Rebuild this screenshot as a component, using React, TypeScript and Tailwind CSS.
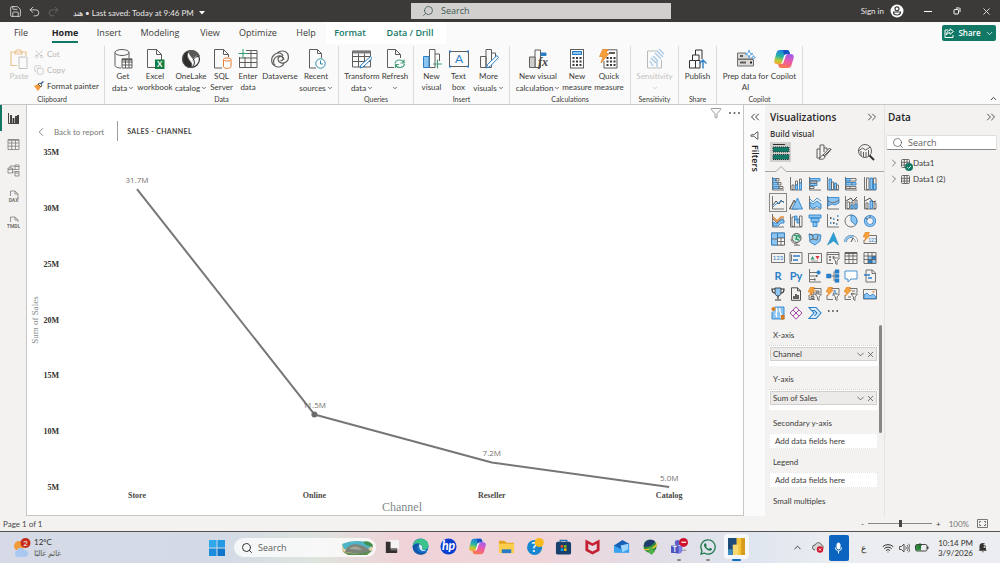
import React from "react";
import {
  ChevronDown,
  ChevronLeft,
  ChevronRight,
  ChevronUp,
  ChevronsLeft,
  ChevronsRight,
  Copy,
  Filter,
  Redo2,
  Save,
  Scissors,
  Search,
  Undo2,
  Wifi,
  X,
} from "lucide-react";
import { FaWhatsapp } from "react-icons/fa";

const INK = "#5f5d5a";
const BLUE = "#2b7fc7";
const SKY = "#8cc4f2";

type SvgProps = { size?: number; box?: string; weight?: number; children: React.ReactNode };

function Glyph({ size = 20, box = "0 0 20 20", weight = 1, children }: SvgProps) {
  return (
    <svg width={size} height={size} viewBox={box} fill="none" stroke={INK} strokeWidth={weight} aria-hidden="true" className="shrink-0">
      {children}
    </svg>
  );
}

function CopilotLogo({ size = 20 }: { size?: number }) {
  const id = React.useId();
  return (
    <svg width={size} height={size} viewBox="0 0 20 20" aria-hidden="true" className="shrink-0">
      <defs>
        <linearGradient id={id + "a"} x1="0.5" y1="0" x2="0.3" y2="1">
          <stop offset="0" stopColor="#1b7fe0" />
          <stop offset="0.45" stopColor="#26b3a4" />
          <stop offset="0.75" stopColor="#b4cf3a" />
          <stop offset="1" stopColor="#f8a62d" />
        </linearGradient>
        <linearGradient id={id + "b"} x1="0.6" y1="0" x2="0.3" y2="1">
          <stop offset="0" stopColor="#a45bf0" />
          <stop offset="0.5" stopColor="#ee5aa6" />
          <stop offset="1" stopColor="#fb7a45" />
        </linearGradient>
      </defs>
      <path d="M6 1h7c1.300 0 2 .8 2.400 2l.5 2h-3c-1.400 0-2.200.8-2.600 2.200L8.400 12.800C8 14.400 7.200 15.200 5.800 15.200H3.200C.8 15.200-.2 13.200.4 11l2-7C2.900 2.200 4.200 1 6 1z" fill={`url(#${id}a)`} />
      <path d="M9 1h4c1.300 0 2 .8 2.400 2l.6 2.100h-3c-1.400 0-2.200.7-2.700 2z" fill="#1852c4" />
      <path d="M14 19H7c-1.300 0-2-.8-2.400-2l-.5-2h2.500c1.400 0 2.600-.8 3-2.200l1.900-5.500c.4-1.500 1.200-2.400 2.600-2.400h2.700c2.400 0 3.400 2 2.800 4.200l-2 7c-.5 1.800-1.800 2.900-3.600 2.900z" fill={`url(#${id}b)`} />
      <path d="M10.600 5.800h1.800c-.7.500-1 1-1.300 2L9.500 13c-.3 1-.9 1.600-1.700 1.900H7c.8-.5 1.100-1.100 1.400-2.100l1.400-5c.2-.8.400-1.400.8-2z" fill="#fff" />
    </svg>
  );
}

const ribbonIcons = {
  getData: (
    <Glyph>
      <ellipse cx="9" cy="3.500" rx="7" ry="3" />
      <path d="M2 3.500v13c0 1.500 3 2.500 6 2.500M16 3.500V9" />
      <path d="M9 10h10v9H9z M9 13h10M9 16h10M12.500 10v9M16 10v9" fill="#fff" />
      <path d="M9 10.500h10" strokeWidth="2" />
    </Glyph>
  ),
  excel: (
    <Glyph>
      <path d="M2.500 .5h9l5 5v13h-14z M11.500 .5v5h5" />
      <rect x="10" y="10.500" width="9.500" height="9.500" fill="#107c41" stroke="none" />
      <text x="14.700" y="18" textAnchor="middle" fontSize="8" fontWeight="bold" fill="#fff" stroke="none">X</text>
    </Glyph>
  ),
  oneLake: (
    <Glyph>
      <circle cx="10" cy="10" r="8.500" strokeWidth="1.200" stroke="#33312f" />
      <path d="M1.800 12C.8 6 4.500 2 8.500 2c-3 3-2.500 6 0 9.500 2 2.500 3 4 2 7C6 19 2.800 16 1.800 12z" fill="#2f2d2b" />
      <path d="M8 2c5-1.500 9 1 10.300 5-3-1-5.300 0-6.300 2.500-2-2-4-4.500-4-7.500z" fill="#5b5957" />
      <path d="M12 9.500c2 3 2 6-1 9M18 7.500c-3 0-5 1-6 4" stroke="#33312f" />
    </Glyph>
  ),
  sql: (
    <Glyph>
      <path d="M10 19H2.500V.5h9l5 5V8 M11.500 .5v5h5" />
      <path d="M11.500 10.500v7c0 2.500 7.500 2.500 7.500 0v-7" fill="#fff" stroke="#e97b35" />
      <ellipse cx="15.200" cy="10.500" rx="3.700" ry="1.600" fill="#fff" stroke="#e97b35" />
    </Glyph>
  ),
  enter: (
    <Glyph>
      <path d="M8 1.500h11v17H1.500V8 M1.500 9h17.500M1.500 13.500h17.500M8 4.500h11M7 8v10.500M13 1.500v17" />
      <path d="M5 0v9M.5 4.500h9" stroke="#2f9c6c" />
    </Glyph>
  ),
  dataverse: (
    <Glyph>
      <path d="M16 3c3 2 3.500 8 0 10-3 2-7.500 1.500-8-3 0-3 4-3.500 5-1 .5 1.500-1 3-2.500 2.500" strokeWidth="1.200" />
      <path d="M5 17c-4-1.500-4.500-8-1-11 3-3 8-2.500 9 1M5 17c3 2 8 1 9-3M16 3c-4-2-7-.5-9 1M5 16c-3-3-1-8 3-9 3-.8 6 .5 6 4" strokeWidth="1.100" />
    </Glyph>
  ),
  recent: (
    <Glyph>
      <path d="M10 19H3.500V.5h8l4 4V9 M11.500 .5v4h4" />
      <circle cx="14.500" cy="14.500" r="4.700" fill="#fff" stroke="#2d8aa8" />
      <path d="M14.500 11.500v3.500h2.500" stroke="#2d8aa8" />
    </Glyph>
  ),
  transform: (
    <Glyph>
      <path d="M.5 2h18v16H.5z M.5 7.500h18M.5 12.500h18M6.500 4.500V18M12.500 4.500V18" />
      <path d="M.5 3.200h18" strokeWidth="2.500" stroke="#7a7876" />
      <path d="M18.500 7.500l1.500 2L11 18l-3 1 1-3z" fill="#fff" stroke={BLUE} />
    </Glyph>
  ),
  refresh: (
    <Glyph>
      <path d="M9 18.500H2.500V.5h8l5 5V9 M10.500 .5v5h5" />
      <path d="M10 14.500c1-4.500 7.500-4.500 8.500-1M19 10.500v3.500h-3.500M19.500 15c-1 4.500-7.500 4.500-8.500 1M10.500 19v-3.500H14" stroke="#4aa07a" strokeWidth="1.200" />
    </Glyph>
  ),
  newVisual: (
    <Glyph>
      <path d="M7.500 .5h5.500v18H7.500z" fill="#fff" />
      <path d="M13 5h4.500v7" />
      <path d="M1.500 7.500h5.500v11H1.500z" fill="#8cc4f2" stroke={BLUE} />
      <path d="M15.500 10.500v9M11 15h9" stroke="#4aa07a" strokeWidth="1.200" />
    </Glyph>
  ),
  textBox: (
    <Glyph>
      <rect x="0.500" y="2.500" width="19" height="15" />
      <text x="10" y="14" textAnchor="middle" fontSize="12" fill={BLUE} stroke="none">A</text>
      <path d="M0 1.500h2v2H0z M18 1.500h2v2h-2z M0 16.500h2v2H0z M18 16.500h2v2h-2z" fill={BLUE} stroke="none" />
    </Glyph>
  ),
  moreVisuals: (
    <Glyph>
      <path d="M7 .5h5.500v18H7z M1.500 7.500H7v11H1.500z M12.500 4h4v5" />
      <path d="M18 6.500l1.500 2L11 17.500l-3.500 1.500 1-3.500z" fill="#fff" stroke={BLUE} />
    </Glyph>
  ),
  newCalc: (
    <Glyph>
      <path d="M7 1h5.500v17.500H7z" />
      <path d="M1.500 8H7v10.500H1.500z" fill="#d0cecc" />
      <path d="M13 4h5v2.500h-5z" fill={BLUE} stroke={BLUE} />
      <text x="15" y="17" textAnchor="middle" fontFamily="Liberation Serif, serif" fontStyle="italic" fontWeight="bold" fontSize="12" fill="#4a4846" stroke="none">fx</text>
    </Glyph>
  ),
  newMeasure: (
    <Glyph>
      <rect x="3.500" y="0.500" width="13" height="18.500" fill="#fff" />
      <rect x="5.500" y="2.500" width="9" height="3" fill={SKY} stroke={BLUE} />
      <path d="M5.500 9h9M5.500 12.500h9M5.500 16h9" strokeWidth="2" strokeDasharray="2 1.500" stroke="#3b3a39" />
    </Glyph>
  ),
  quickMeasure: (
    <Glyph>
      <path d="M8 .8h10v18.200H5V12" fill="#fff" />
      <path d="M10 4h6" strokeWidth="2" />
      <path d="M7.500 9h9M7.500 12.500h9M7.500 16h9" strokeWidth="2" strokeDasharray="2 1.500" stroke="#3b3a39" />
      <path d="M4 0h5L7 4.500h3L2 14l2-6.500H.5z" fill="#f9a13a" stroke="#e07b1d" strokeWidth=".7" />
    </Glyph>
  ),
  sensitivity: (
    <Glyph>
      <g opacity=".4">
        <path d="M12 2H2.500v17h14V11" />
        <path d="M6 9l5 5M8 7l5 5M10 4l6 6M12 2l6 6M14 0l5 5M5 12l3 5M12 12v6" stroke={BLUE} strokeWidth="1.300" />
      </g>
    </Glyph>
  ),
  publish: (
    <Glyph>
      <path d="M7.500 6V1h6.500v9M4.500 11V6H11v5M1.500 11.500h6v7.500h-6zM7.500 11.500H12V19H7.500" stroke="#33312f" />
      <path d="M15 19.500V11M11.500 14.500L15 11l3.500 3.500" stroke={BLUE} strokeWidth="1.400" />
    </Glyph>
  ),
  prep: (
    <Glyph>
      <path d="M10 4H1.500v6h16M1.500 10.500h16v6.500h-16z" fill="#dcdad8" stroke="#706e6b" />
      <path d="M4 7h3M4 13.500h6" strokeWidth="1.800" />
      <path d="M14 13.500h2" strokeWidth="2" stroke="#222" />
      <path d="M13 1l1 3 3 1-3 1-1 3-1-3-3-1 3-1zM17.500 6.500l.5 1.500 1.500.5-1.500.5-.5 1.500-.5-1.500-1.500-.5L17 8z" fill="#fff" stroke="#4a9be0" strokeWidth=".8" />
    </Glyph>
  ),
  copilot: <CopilotLogo />,
};

type Command = { icon: React.ReactNode; lines: string[]; menu?: boolean; width: string; disabled?: boolean };
type Group = { name: string; width: string; commands: Command[] };

const groups: Group[] = [
  {
    name: "Data",
    width: "w-[234px]",
    commands: [
      { icon: ribbonIcons.getData, lines: ["Get", "data"], menu: true, width: "w-[28px]" },
      { icon: ribbonIcons.excel, lines: ["Excel", "workbook"], width: "w-[36px]" },
      { icon: ribbonIcons.oneLake, lines: ["OneLake", "catalog"], menu: true, width: "w-[36px]" },
      { icon: ribbonIcons.sql, lines: ["SQL", "Server"], width: "w-[25px]" },
      { icon: ribbonIcons.enter, lines: ["Enter", "data"], width: "w-[28px]" },
      { icon: ribbonIcons.dataverse, lines: ["Dataverse"], width: "w-[36px]" },
      { icon: ribbonIcons.recent, lines: ["Recent", "sources"], menu: true, width: "w-[36px]" },
    ],
  },
  {
    name: "Queries",
    width: "w-[75px]",
    commands: [
      { icon: ribbonIcons.transform, lines: ["Transform", "data"], menu: true, width: "w-[38px]" },
      { icon: ribbonIcons.refresh, lines: ["Refresh", ""], menu: true, width: "w-[28px]" },
    ],
  },
  {
    name: "Insert",
    width: "w-[96px]",
    commands: [
      { icon: ribbonIcons.newVisual, lines: ["New", "visual"], width: "w-[28px]" },
      { icon: ribbonIcons.textBox, lines: ["Text", "box"], width: "w-[26px]" },
      { icon: ribbonIcons.moreVisuals, lines: ["More", "visuals"], menu: true, width: "w-[34px]" },
    ],
  },
  {
    name: "Calculations",
    width: "w-[121px]",
    commands: [
      { icon: ribbonIcons.newCalc, lines: ["New visual", "calculation"], menu: true, width: "w-[46px]" },
      { icon: ribbonIcons.newMeasure, lines: ["New", "measure"], width: "w-[32px]" },
      { icon: ribbonIcons.quickMeasure, lines: ["Quick", "measure"], width: "w-[32px]" },
    ],
  },
  {
    name: "Sensitivity",
    width: "w-[48px]",
    commands: [{ icon: ribbonIcons.sensitivity, lines: ["Sensitivity", ""], menu: true, width: "w-[40px]", disabled: true }],
  },
  {
    name: "Share",
    width: "w-[38px]",
    commands: [{ icon: ribbonIcons.publish, lines: ["Publish"], width: "w-[32px]" }],
  },
  {
    name: "Copilot",
    width: "w-[86px]",
    commands: [
      { icon: ribbonIcons.prep, lines: ["Prep data for", "AI"], width: "w-[48px]" },
      { icon: ribbonIcons.copilot, lines: ["Copilot"], width: "w-[28px]" },
    ],
  },
];

const tabs = [
  { name: "File", width: "w-[42px]" },
  { name: "Home", width: "w-[46px]" },
  { name: "Insert", width: "w-[42px]" },
  { name: "Modeling", width: "w-[60px]" },
  { name: "View", width: "w-[40px]" },
  { name: "Optimize", width: "w-[56px]" },
  { name: "Help", width: "w-[40px]" },
  { name: "Format", width: "w-[48px]" },
  { name: "Data / Drill", width: "w-[72px]" },
];

function TitleBar() {
  return (
    <header className="flex h-[22px] shrink-0 items-center bg-[#3b3a39] text-[8px] text-[#e8e6e4]">
      <div className="flex w-[41.1%] items-center">
        <button aria-label="Save" className="ml-[9px]"><Save size={13} strokeWidth={1.5} /></button>
        <button aria-label="Undo" className="ml-[6px]"><Undo2 size={13} strokeWidth={1.5} /></button>
        <button aria-label="Redo" className="ml-[6px] text-[#6d6b69]" disabled><Redo2 size={13} strokeWidth={1.5} /></button>
        <button className="ml-[13px] flex items-center gap-[5px] pt-[3px] whitespace-nowrap">
          <span><bdi>هند</bdi> • Last saved: Today at 9:46 PM</span>
          <svg width="6" height="4" viewBox="0 0 6 4" aria-hidden="true"><path d="M0 0h6L3 3.500z" fill="#fff" /></svg>
        </button>
      </div>
      <label className="flex h-4 w-[26%] items-center gap-[7px] bg-[#d2d0ce] px-[11px] text-[#3f5c55]">
        <Search size={12} strokeWidth={1.600} className="-scale-x-100" />
        <input aria-label="Search" placeholder="Search" className="min-w-0 flex-1 bg-transparent font-['Open_Sans',sans-serif] text-[9px] outline-none placeholder:text-[#3f5c55]" />
      </label>
      <div className="ml-auto flex items-center">
        <button className="flex items-center gap-[6px]">
          Sign in
          <svg width="14" height="14" viewBox="0 0 14 14" aria-hidden="true">
            <circle cx="7" cy="7" r="6.500" fill="#fff" />
            <circle cx="7" cy="4.800" r="2" fill="none" stroke="#3b3a39" strokeWidth="1.200" />
            <path d="M3.500 8h7c0 4-7 4-7 0z" fill="none" stroke="#3b3a39" strokeWidth="1.200" />
          </svg>
        </button>
        <button aria-label="Minimize" className="ml-5 flex h-3 w-[8px] items-center"><span className="h-px w-full bg-white" /></button>
        <button aria-label="Restore" className="ml-[21px]">
          <svg width="8" height="8" viewBox="0 0 8 8" fill="none" stroke="#fff" aria-hidden="true"><rect x="1" y="2.500" width="4.500" height="4.500" rx=".8" /><path d="M3 1h3.500l.5.500V5" /></svg>
        </button>
        <button aria-label="Close" className="mr-2 ml-5"><X size={11} strokeWidth={2} /></button>
      </div>
    </header>
  );
}

function Tabs() {
  return (
    <nav className="flex h-[22px] shrink-0 items-center bg-[#fafafa] font-['Open_Sans',sans-serif] text-[9px] text-[#3b3a39]">
      {tabs.map((t, i) => (
        <button
          key={t.name}
          className={`${t.width} flex h-full items-center justify-center whitespace-nowrap ${i === 1 ? "font-bold text-[#252423]" : ""} ${i > 6 ? "bg-white font-semibold text-[#117865]" : ""}`}
        >
          <span className={i === 1 ? "border-b-2 border-[#117865] pt-[2px] leading-[16px]" : ""}>{t.name}</span>
        </button>
      ))}
      <button className="mr-1 ml-auto flex h-4 w-[54px] items-center justify-center gap-[4px] rounded-[2px] bg-[#117865] text-[8px] font-semibold text-white">
        <svg width="10" height="10" viewBox="0 0 10 10" fill="none" stroke="#fff" aria-hidden="true"><path d="M4 2H1v7.500h8V7M6 .8L9.500 3.500 6 6.200V4.700C4 4.700 3 5.500 2.500 7c0-2.500 1-4.300 3.500-4.600z" /></svg>
        Share
        <ChevronDown size={9} />
      </button>
    </nav>
  );
}

function Ribbon() {
  return (
    <div className="flex h-[61px] shrink-0 items-stretch border-b border-[#c8c6c4] bg-[#fafafa] pt-[2px] text-[8px] text-[#3b3a39]">
      <section className="flex w-[105px] flex-col border-r border-[#dddbd9]">
        <div className="flex flex-1 pt-[3px]">
          <button disabled className="ml-2 flex w-[22px] flex-col items-center text-[#c4c2c0]">
            <Glyph>
              <path d="M8 16.500H2V3h15v4M6 3c1-3 6-3 7 0v2H6z" stroke="#e9c48f" strokeWidth="1.200" />
              <path d="M10 8h8v11.500h-8z" fill="#fafafa" stroke="#c4c2c0" />
            </Glyph>
            <span className="mt-[2px] leading-[11px]">Paste</span>
          </button>
          <div className="ml-1 flex flex-col">
            <button disabled className="flex h-[10px] items-center gap-[3px] text-[#b8b6b4]"><Scissors size={10} strokeWidth={1.500} className="-rotate-90" />Cut</button>
            <button disabled className="mt-[6px] flex h-[10px] items-center gap-[3px] text-[#b8b6b4]"><Copy size={10} strokeWidth={1.500} />Copy</button>
            <button className="mt-[6px] flex h-[10px] items-center gap-[3px] whitespace-nowrap">
              <svg width="10" height="10" viewBox="0 0 10 10" aria-hidden="true"><path d="M0 5l4-2 3 3-3 4z" fill="#f39a3d" /><path d="M4 3l2-1 2 2-1 2z" fill="#fff" stroke="#3b3a39" strokeWidth=".8" /><path d="M6.500 3L9.500 .5" stroke="#2f5f8a" strokeWidth="1.400" /></svg>
              Format painter
            </button>
          </div>
        </div>
        <div className="h-[10px] text-center text-[7px] leading-[10px]">Clipboard</div>
      </section>
      {groups.map((g) => (
        <section key={g.name} className={`${g.width} flex flex-col border-r border-[#dddbd9]`}>
          <div className="flex flex-1 justify-center pt-[3px]">
            {g.commands.map((c) => (
              <button key={c.lines.join(" ")} disabled={c.disabled} className={`${c.width} flex flex-col items-center ${c.disabled ? "text-[#c4c2c0]" : ""}`}>
                {c.icon}
                <span className="mt-[2px] leading-[11px] whitespace-nowrap">{c.lines[0]}</span>
                {c.lines.length > 1 && (
                  <span className="flex items-center gap-px leading-[11px] whitespace-nowrap">
                    {c.lines[1]}
                    {c.menu && <ChevronDown size={6} strokeWidth={3} className="my-[3px]" />}
                  </span>
                )}
              </button>
            ))}
          </div>
          <div className="h-[10px] text-center text-[7px] leading-[10px]">{g.name}</div>
        </section>
      ))}
      <button aria-label="Collapse ribbon" className="mr-[2px] ml-auto self-end pb-[1px]"><ChevronUp size={9} strokeWidth={2.500} /></button>
    </div>
  );
}

const views = [
  { name: "Report view", icon: <><path d="M1.500 1v10.500H12" /><path d="M4 3v8M6.500 6v5M9 4v7M11 3v8" strokeWidth="1.800" /></> },
  { name: "Table view", icon: <><path d="M1 1.500h11v10H1zM1 5h11M1 8.200h11M4.700 1.500v10M8.500 1.500v10" /><path d="M1 2h11" strokeWidth="1.500" /></> },
  { name: "Model view", icon: <path d="M1 4h4.500v5H1zM8 1h4v4.500H8zM8 7.500h4V12H8zM5.500 5.500H8M5.500 8H8M1 5.500h4.500M8 2.500h4M8 9h4M3 4V2h5" /> },
  { name: "DAX query view", text: "DAX", icon: <path d="M3.500 6V1h4.500l3 3v5.500M8 1v3h3" /> },
  { name: "TMDL view", text: "TMDL", icon: <path d="M3.500 6V1h4.500l3 3v2M8 1v3h3" /> },
];

function ViewRail() {
  return (
    <nav className="flex w-[26px] shrink-0 flex-col bg-[#f3f2f1]">
      {views.map((v, i) => (
        <button key={v.name} aria-label={v.name} className={`flex h-[26px] flex-col items-center justify-center border-l-2 pr-[2px] ${i === 0 ? "border-[#117865]" : "border-transparent"}`}>
          <svg width="13" height="13" viewBox="0 0 13 13" fill="none" stroke={i === 0 ? "#33312f" : "#8a8885"} strokeWidth=".9" aria-hidden="true">
            {v.icon}
            {v.text && <text x="6.500" y="11.500" textAnchor="middle" fontSize="5" fontWeight="bold" fontFamily="Roboto" fill="#74726f" stroke="none">{v.text}</text>}
          </svg>
        </button>
      ))}
    </nav>
  );
}

const sales = [
  { channel: "Store", value: 31.7, label: "31.7M" },
  { channel: "Online", value: 11.5, label: "11.5M" },
  { channel: "Reseller", value: 7.2, label: "7.2M" },
  { channel: "Catalog", value: 5.0, label: "5.0M" },
];
const px = (i: number) => 110 + i * 177.4;
const py = (v: number) => 345 - (v - 5) * 11.16;

function Chart() {
  return (
    <svg viewBox="0 0 716 373" preserveAspectRatio="xMidYMid meet" className="min-h-0 w-full flex-1" role="img" aria-label="Sum of Sales by Channel">
      <g fontFamily="Liberation Serif, serif" fontWeight="bold" fontSize="8" fill="#33312f">
        {[35, 30, 25, 20, 15, 10, 5].map((t) => (
          <text key={t} x="32" y={py(t) + 3} textAnchor="end">{t}M</text>
        ))}
        {sales.map((s, i) => (
          <text key={s.channel} x={px(i)} y="356" textAnchor="middle" fill="#4a4846">{s.channel}</text>
        ))}
      </g>
      <g fontFamily="Liberation Serif, serif" fill="#7f8b8b">
        <text x="375" y="369" textAnchor="middle" fontSize="12">Channel</text>
        <text transform="translate(11 178) rotate(-90)" textAnchor="middle" fontSize="9">Sum of Sales</text>
      </g>
      <polyline points={sales.map((s, i) => `${px(i)},${py(s.value)}`).join(" ")} fill="none" stroke="#757775" strokeWidth="2" strokeLinejoin="round" />
      <circle cx={px(1)} cy={py(11.5)} r="3" fill="#6b6d6b" />
      <g fontFamily="Open Sans, sans-serif" fontSize="8" fill="#75736f" textAnchor="middle">
        {sales.map((s, i) => (
          <text key={s.channel} x={px(i)} y={py(s.value) - 6}>{s.label}</text>
        ))}
      </g>
    </svg>
  );
}

function Canvas() {
  return (
    <main className="flex min-w-0 flex-1 flex-col border-r border-b border-l border-[#c8c6c4] bg-white">
      <div className="flex h-[37px] shrink-0 items-start">
        <button className="mt-5 ml-[7px] flex items-center gap-[6px] text-[8px] leading-[12px] text-[#797775]">
          <ChevronLeft size={14} strokeWidth={1.500} /> Back to report
        </button>
        <div className="mt-4 ml-[13px] h-5 border-l border-[#a19f9d]" />
        <h1 className="mt-5 ml-[9px] text-[7px] leading-[12px] font-bold tracking-wider text-[#484644]">SALES - CHANNEL</h1>
        <button aria-label="Filters on visual" className="mt-[2px] ml-auto text-[#797775]"><Filter size={12} strokeWidth={1.500} /></button>
        <button aria-label="More options" className="mt-[7px] mr-[3px] ml-[7px]">
          <svg width="11" height="2" viewBox="0 0 11 2" fill="#605e5c" aria-hidden="true"><circle cx="1" cy="1" r="1" /><circle cx="5.500" cy="1" r="1" /><circle cx="10" cy="1" r="1" /></svg>
        </button>
      </div>
      <Chart />
    </main>
  );
}

const axis = <path d="M1.500 0v13H13" />;
const bolt = <path d="M2.500 0h4L5 3h2.500L1.500 9l1-4H0z" fill="#f5a13c" stroke="#d9791c" strokeWidth=".5" />;
const funnel = <path d="M7 7h6.500L11 10v3.500L9.500 12.500V10z" fill="#fff" />;

const visuals: { name: string; icon: React.ReactNode }[] = [
  { name: "Stacked bar chart", icon: <>{axis}<path d="M2 1.500h3v2.500H2zM2 5.500h5v2.500H2zM2 9.500h6v2H2z" fill={SKY} stroke={BLUE} /><path d="M5 1.500h3v2.500H5zM7 5.500h3v2.500H7zM8 9.500h4v2H8z" /></> },
  { name: "Stacked column chart", icon: <>{axis}<path d="M3 8h2v4.500H3zM6.500 4h2v4h-2zM10.500 2h2v4h-2z" /><path d="M6.500 8h2v4.500h-2zM10.500 6h2v6.500h-2z" fill={SKY} stroke={BLUE} /></> },
  { name: "Clustered bar chart", icon: <>{axis}<path d="M2 1.500h10v2.500H2zM2 6.500h7v2H2z" fill={SKY} stroke={BLUE} /><path d="M2 4h7v2H2zM2 9.500h4v2H2z" /></> },
  { name: "Clustered column chart", icon: <>{axis}<path d="M3 2h2.500v10.500H3zM8.500 6h2v6.500h-2z" fill={SKY} stroke={BLUE} /><path d="M5.500 5h2v7.500h-2zM10.500 8h2v4.500h-2z" /></> },
  { name: "100% stacked bar chart", icon: <>{axis}<path d="M2 1.500h10v2.500H2zM2 9.500h10v2H2z" /><path d="M2 5.500h10v2.500H2zM2 1.500h4v2.500H2z" fill={SKY} stroke={BLUE} /><path d="M8 5.500v2.500M6 9.500v2" /></> },
  { name: "100% stacked column chart", icon: <>{axis}<path d="M3.500 1h2.500v11.500H3.500zM10.500 1h2.500v11.500h-2.500z" /><path d="M7 1h2.500v11.500H7zM10.500 7h2.500v5.500h-2.500z" fill={SKY} stroke={BLUE} /></> },
  { name: "Line chart", icon: <>{axis}<path d="M2 9l3-4 3 3 2-3 3 1" stroke="#33312f" /><path d="M2 11l3-3 3-1 2-3 3 3" stroke={BLUE} /></> },
  { name: "Area chart", icon: <><path d="M.5 13L5 5l3 4 1 4z" fill="#d8d6d4" /><path d="M3 13L8.500 2l5 11z" fill={SKY} stroke={BLUE} /><path d="M.5 13L5 4l2 2" /></> },
  { name: "Stacked area chart", icon: <>{axis}<path d="M2 6l3 2 4-3 4 3v4.500l-4-2-4 2-3-2z" fill={SKY} stroke={BLUE} /><path d="M2 3l3 3 4-4 4 3" stroke={BLUE} /></> },
  { name: "100% stacked area chart", icon: <>{axis}<path d="M2 1.500h11V7l-4 2-3-1-4 2z" fill={SKY} stroke={BLUE} /><path d="M2 5l4 2 4-1 3-2" /></> },
  { name: "Line and stacked column chart", icon: <>{axis}<path d="M3 6h2.500v6.500H3zM7 6h2v6.500H7zM11 4h2v8.500h-2z" /><path d="M7 9h2v3.500H7zM11 8h2v4.500h-2z" fill={SKY} stroke={BLUE} /><path d="M2 5l5-3 2 3 4-4" stroke="#33312f" /></> },
  { name: "Line and clustered column chart", icon: <>{axis}<path d="M3 7h2v5.500H3zM11 7h2v5.500h-2z" /><path d="M7 5h2.500v7.500H7z" fill={SKY} stroke={BLUE} /><path d="M2 5l5-3 3 4 3-1" stroke="#33312f" /></> },
  { name: "Ribbon chart", icon: <>{axis}<path d="M2 8l4 2 3-4h4v3h-3l-3 3H2z" fill={SKY} stroke={BLUE} /><path d="M2 3l4 4 4-4h3" stroke="#e08a3a" strokeWidth="1.600" /><path d="M2 5l4 4 4-4h3" /></> },
  { name: "Waterfall chart", icon: <>{axis}<path d="M3 3h2.500v9.500H3z" /><path d="M5.500 2H8v4H5.500zM8 5h2.500v4H8z" fill={SKY} stroke={BLUE} /><path d="M10.500 2H13v10.500h-2.500z" /></> },
  { name: "Funnel", icon: <path d="M1 1h12v3H1zM3 4h8v4H3zM5 8h4v4.500H5z" fill={SKY} stroke={BLUE} /> },
  { name: "Scatter chart", icon: <>{axis}<path d="M4 9h1.500M7 5h1.500M10 10h1.500M11 2h1.500" strokeWidth="1.600" stroke={BLUE} /><path d="M4 4h1.500M7 9h1.500M11 6h1.500" strokeWidth="1.600" stroke="#33312f" /></> },
  { name: "Pie chart", icon: <><circle cx="7" cy="7" r="6" /><path d="M7 7V1a6 6 0 0 1 4.500 10z" fill={SKY} stroke={BLUE} /></> },
  { name: "Donut chart", icon: <><circle cx="7" cy="7" r="4.500" stroke={BLUE} strokeWidth="3.200" /><circle cx="7" cy="7" r="4.500" stroke={SKY} strokeWidth="1.800" /><path d="M7 1v3.500M2 4l3 1.500" /></> },
  { name: "Treemap", icon: <><path d="M.5 1h13v12H.5z" /><path d="M.5 1h6v12h-6zM6.500 1h7v5h-7z" fill={SKY} stroke={BLUE} /><path d="M6.500 6h7v7h-7z" fill="#fff" /><path d="M.5 7h6M6.500 9.500h7M10 6v7" /></> },
  { name: "Map", icon: <><circle cx="7.500" cy="6" r="4.500" fill="#cfe9dc" stroke="#33312f" /><path d="M5 3l3 1-1 3 3 1M9 3l2 3" stroke="#2f9c6c" strokeWidth="1.500" /><path d="M2 7c0 3 3 5 6 5M8 11.500V13M5 13.200h6" /></> },
  { name: "Filled map", icon: <><path d="M1 2l4 1 3-1 5 1-1 6-5 4-5-3z" fill={SKY} stroke={BLUE} /><path d="M1 2l4 1v4l4 1 1-5M2 8l3-1" /></> },
  { name: "Azure map", icon: <path d="M7.500 .5L12.500 13l-5-4L1.500 13z" fill="#2e9fd6" stroke="#1d7fb5" strokeWidth=".5" /> },
  { name: "Gauge", icon: <><path d="M1.500 10a5.500 5.500 0 0 1 11 0" strokeWidth="3" /><path d="M1.500 10a5.500 5.500 0 0 1 8-5" strokeWidth="2.200" stroke={SKY} /><path d="M9.500 5a5.500 5.500 0 0 1 3 5" strokeWidth="1.800" stroke="#fff" /><path d="M7 10l2-4" stroke="#33312f" /></> },
  { name: "Card (new)", icon: <><path d="M2 3.500h11.500v8H1V8" /><text x="9.500" y="10" textAnchor="middle" fontSize="5" fill={BLUE} stroke="none">123</text>{bolt}</> },
  { name: "Card", icon: <><path d="M.5 2.500h13v9H.5z" /><text x="7" y="9" textAnchor="middle" fontSize="6" fill={BLUE} stroke="none">123</text></> },
  { name: "Multi-row card", icon: <><path d="M1 1.500h12v11H1z" /><path d="M4 5h7M4 9h5" stroke={BLUE} strokeWidth="1.500" /><path d="M2.500 3.500v7" /></> },
  { name: "KPI", icon: <><path d="M.5 2.500h13v9H.5z" /><path d="M2.500 8.500L4.500 5l2 3.500z" fill="#2f9c6c" stroke="none" /><path d="M7.500 5h4l-2 3.500z" fill="#d9363e" stroke="none" /><path d="M3 10h7" strokeWidth=".6" /></> },
  { name: "Slicer", icon: <><path d="M13 6V1.500H1v11h6M1 3.500h12" /><path d="M3 6h2M3 9h2M6.500 6h2" strokeWidth="1.500" />{funnel}</> },
  { name: "Table", icon: <><path d="M1 1.500h12v11H1zM1 5h12M1 8.500h12M5 1.500v11M9 1.500v11" /><path d="M1 2h12" strokeWidth="1.800" /></> },
  { name: "Matrix", icon: <><path d="M5 5h8v7.500H5z" fill={SKY} stroke="none" /><path d="M9 5h4v3.500H9zM5 8.500h4v4H5z" fill={BLUE} stroke="none" /><path d="M1 1.500h12v11H1zM1 5h12M1 8.500h12M5 1.500v11M9 1.500v11" /></> },
  { name: "R script visual", icon: <text x="7" y="11" textAnchor="middle" fontWeight="bold" fontSize="11" fill={BLUE} stroke="none">R</text> },
  { name: "Python visual", icon: <text x="7" y="11" textAnchor="middle" fontWeight="bold" fontSize="11" fill={BLUE} stroke="none">Py</text> },
  { name: "Key influencers", icon: <>{axis}<path d="M2 3.500h7M2 7h6M2 10.500h4" /><circle cx="10.500" cy="3.500" r="1.700" fill={BLUE} stroke={BLUE} /><path d="M8 7h1.500M6 10.500h1.500" strokeWidth="2" /></> },
  { name: "Decomposition tree", icon: <><path d="M5 7h3V2.500M8 7v5" /><path d="M.5 5h4.500v4H.500zM9 .8h4v3.500H9zM9 5.500h4v3H9zM9 9.800h4v3.500H9z" fill={BLUE} stroke={BLUE} strokeWidth=".5" /></> },
  { name: "Q&A", icon: <path d="M1 2h12v8H7l-3 3v-3H1z" fill="#fff" stroke={BLUE} /> },
  { name: "Narrative", icon: <><path d="M3 1h6.500l3 3v9H3zM9 1v3.500h3" /><path d="M1 6h6M5 9h4" stroke={BLUE} strokeWidth="1.300" /></> },
  { name: "Goals", icon: <><path d="M4 1h6v5c0 4-6 4-6 0z" fill={SKY} stroke="#33312f" /><path d="M4 2H1c0 3 1 4 3 4M10 2h3c0 3-1 4-3 4M7 9v3M4 13h6" stroke="#33312f" strokeWidth="1.200" /></> },
  { name: "Paginated report", icon: <><path d="M2.500 .8h6l3 3v9.500h-9zM8.500 .8v3h3" stroke="#33312f" /><path d="M5 9v3M7 7v5M9 8v4" strokeWidth="1.500" stroke="#33312f" /></> },
  { name: "Button slicer", icon: <><path d="M5 1.500h8V6M1 8v4.500h6" /><path d="M3 5h3v3H3zM8 4h3v2H8zM3 9.500h3v2H3z" fill="#d0cecc" />{funnel}{bolt}</> },
  { name: "Text slicer", icon: <><path d="M5 1.500h8V6M1 8v4.500h6" /><text x="8.500" y="9" textAnchor="middle" fontSize="7" fill={BLUE} stroke="none">A</text>{funnel}{bolt}</> },
  { name: "List slicer", icon: <><path d="M5 1.500h8V6M1 8v4.500h6M8 4h3M7 6.500h3M4 10h3" />{funnel}{bolt}</> },
  { name: "Image", icon: <><path d="M.5 2.500h13v9.500H.5z" /><path d="M1 11.500V8l3-2 3 3 3-2 3 3v1.500z" fill={SKY} stroke={BLUE} /><circle cx="10.500" cy="4.800" r="1" fill="#e08a3a" stroke="none" /></> },
  { name: "ArcGIS Maps", icon: <><path d="M4 1h9v12H1V6" fill={SKY} stroke={BLUE} /><path d="M5 2c3 3-2 5 1 9M9 2c-2 4 3 5 1 10" stroke="#fff" strokeWidth="1.400" /><circle cx="2.500" cy="3" r="2" fill="#d9791c" stroke="none" /><path d="M10 9h3.500v4.500H10z" fill="#d9791c" stroke="none" /></> },
  { name: "Power Apps", icon: <path d="M7 .8l6 6.200-6 6.200L1 7zM4 4l6 6M10 4l-6 6" stroke="#a349a4" strokeWidth="1" /> },
  { name: "Power Automate", icon: <path d="M1 1.500h7l5 5.500-5 5.500H1L6 7zM3.500 4.500h3L9 7l-2.500 3" fill="#dcedfb" stroke={BLUE} strokeWidth="1.100" /> },
  { name: "Get more visuals", icon: <path d="M2 5h1.500M6.200 5h1.500M10.500 5H12" strokeWidth="1.500" stroke="#33312f" /> },
];

const wells: { label: string; field?: string; empty?: boolean }[] = [
  { label: "X-axis", field: "Channel" },
  { label: "Y-axis", field: "Sum of Sales" },
  { label: "Secondary y-axis", empty: true },
  { label: "Legend", empty: true },
  { label: "Small multiples" },
];

function Visualizations() {
  return (
    <aside className="flex w-[119px] shrink-0 flex-col overflow-hidden bg-[#f3f2f1] text-[8px] text-[#3b3a39]">
      <div className="flex h-6 shrink-0 items-center justify-between pr-[5px] pl-[5px]">
        <h2 className="font-['Open_Sans',sans-serif] text-[10px] font-semibold text-[#252423]">Visualizations</h2>
        <button aria-label="Collapse Visualizations"><ChevronsRight size={14} strokeWidth={1.500} /></button>
      </div>
      <h3 className="h-[11px] shrink-0 pl-[5px] font-['Open_Sans',sans-serif] text-[8px] leading-[10px] font-semibold">Build visual</h3>
      <div className="flex h-6 shrink-0 items-center pl-[5px]">
        <button aria-label="Build visual" className="flex h-5 w-[21px] items-center justify-center bg-[#d2d0ce]">
          <Glyph size={18} box="0 0 18 18">
            <path d="M1 1.500h12" stroke="#33312f" />
            <path d="M1 4h16v5H1zM1 11.500h16v5H1z" fill="#117865" stroke="#33312f" strokeDasharray="1 1" />
          </Glyph>
        </button>
        <button aria-label="Format visual" className="ml-6">
          <Glyph size={18} box="0 0 18 18">
            <path d="M2 15V6h3v9M5 6V2h4v7M9 5h3v2M2 15h5" />
            <path d="M16 6l-7 7M14.500 5l1.500 1.500-6 7-2-1.500zM8 12c-2 0-2 3-4 4 3 .8 6 0 6-2.500z" fill="#f3f2f1" />
          </Glyph>
        </button>
        <button aria-label="Analytics" className="ml-6">
          <Glyph size={18} box="0 0 18 18">
            <circle cx="8" cy="8" r="6.500" />
            <path d="M4 13V8M6.500 14V9M9 14V9M11.500 13V7M1.500 8l4-3 3 2 5-3" />
            <path d="M12.500 12.500L17 17" stroke="#33312f" strokeWidth="2" />
          </Glyph>
        </button>
      </div>
      <svg width="100%" height="9" className="shrink-0" fill="none" stroke="#a8a6a4" aria-hidden="true">
        <path d="M0 7.500h11l5-5 5 5h1000" />
      </svg>
      <div className="mt-[2px] ml-1 grid h-[147px] w-[110px] shrink-0 grid-cols-6 grid-rows-8">
        {visuals.map((v, i) => (
          <button key={v.name} aria-label={v.name} className={`flex items-center justify-center ${i === 6 ? "border border-[#8a8886]" : ""}`}>
            <Glyph size={14} box="0 0 14 14" weight={0.85}>{v.icon}</Glyph>
          </button>
        ))}
      </div>
      <div className="mt-[3px] flex min-h-0 flex-1 overflow-hidden">
        <div className="flex w-[113px] flex-col gap-[3px] pl-[4px]">
          {wells.map((w) => (
            <section key={w.label} className="shrink-0">
              <h4 className="h-5 pl-[4px] leading-5">{w.label}</h4>
              {w.field && (
                <div className="h-[21px] border-t border-dotted border-[#d2d0ce] bg-white px-px pt-px">
                  <div className="flex h-[14px] items-center border border-[#d2d0ce] bg-[#edebe9] pl-[2px]">
                    <span className="flex-1">{w.field}</span>
                    <button aria-label={`${w.field} options`}><ChevronDown size={11} strokeWidth={1.500} /></button>
                    <button aria-label={`Remove ${w.field}`} className="mr-px"><X size={9} strokeWidth={1.800} /></button>
                  </div>
                </div>
              )}
              {w.empty && <div className="h-4 border border-dotted border-[#e6e4e2] bg-white pl-[5px] leading-[14px]">Add data fields here</div>}
            </section>
          ))}
        </div>
        <div className="ml-px h-[108px] w-[3px] rounded-sm bg-[#8a8886]" />
      </div>
    </aside>
  );
}

function TableGlyph({ checked }: { checked?: boolean }) {
  return (
    <span className="relative flex">
      <svg width="9" height="9" viewBox="0 0 9 9" fill="none" stroke="#605e5c" strokeWidth=".9" aria-hidden="true"><rect x=".5" y=".5" width="8" height="8" rx="1" /><path d="M.5 3.300h8M.5 6h8M3.300 .5v8M6 .5v8" /></svg>
      {checked && (
        <svg width="8" height="8" viewBox="0 0 8 8" className="absolute top-[4px] left-[4px]" aria-hidden="true"><circle cx="4" cy="4" r="4" fill="#117865" /><path d="M2.200 4l1.400 1.400L6 3" fill="none" stroke="#fff" strokeWidth=".9" /></svg>
      )}
    </span>
  );
}

function DataPane() {
  return (
    <aside className="w-[116px] shrink-0 border-l border-[#e6e4e2] bg-[#f3f2f1] text-[8px] text-[#3b3a39]">
      <div className="flex h-6 items-center justify-between pr-[2px] pl-[3px]">
        <h2 className="font-['Open_Sans',sans-serif] text-[10px] font-semibold text-[#252423]">Data</h2>
        <button aria-label="Collapse Data"><ChevronsRight size={14} strokeWidth={1.500} /></button>
      </div>
      <label className="mt-[6px] mr-[3px] ml-px flex h-[15px] items-center gap-1 rounded-[2px] border border-[#e1dfdd] border-b-[#8a8886] bg-white pl-[5px]">
        <Search size={12} strokeWidth={1.500} className="text-[#605e5c]" />
        <input aria-label="Search data" placeholder="Search" className="min-w-0 flex-1 bg-transparent font-['Open_Sans',sans-serif] text-[9px] outline-none placeholder:text-[#605e5c]" />
      </label>
      <ul className="mt-[5px]">
        {["Data1", "Data1 (2)"].map((name, i) => (
          <li key={name}>
            <button className="flex h-4 items-center pl-[3px]">
              <ChevronRight size={12} strokeWidth={1.300} className="mr-px" />
              <TableGlyph checked={i === 0} />
              <span className="ml-[3px]">{name}</span>
            </button>
          </li>
        ))}
      </ul>
    </aside>
  );
}

function StatusBar() {
  return (
    <footer className="flex h-[15px] shrink-0 items-center bg-[#f3f2f1] text-[8px] text-[#484644]">
      <span className="ml-[3px]">Page 1 of 1</span>
      <div className="mr-3 ml-auto flex items-center">
        <button aria-label="Zoom out">-</button>
        <input
          type="range"
          aria-label="Zoom"
          defaultValue={50}
          className="mx-[4px] h-[9px] w-[64px] appearance-none bg-transparent [&::-webkit-slider-runnable-track]:h-px [&::-webkit-slider-runnable-track]:bg-[#8a8886] [&::-webkit-slider-thumb]:mt-[-3px] [&::-webkit-slider-thumb]:h-[7px] [&::-webkit-slider-thumb]:w-[3px] [&::-webkit-slider-thumb]:appearance-none [&::-webkit-slider-thumb]:bg-[#484644]"
        />
        <button aria-label="Zoom in">+</button>
        <span className="ml-2 text-[#797775]">100%</span>
        <button aria-label="Fit to page" className="ml-2">
          <svg width="11" height="9" viewBox="0 0 11 9" fill="none" stroke="#797775" aria-hidden="true"><path d="M.5 .5h10v8H.5z" /><path d="M2.500 4V2.500H4M7 2.500h1.500V4M8.500 5v1.500H7M4 6.500H2.500V5" /></svg>
        </button>
      </div>
    </footer>
  );
}

const apps: { name: string; icon: React.ReactNode; running?: "idle" | "active" }[] = [
  { name: "Task view", icon: <><path d="M6 2h11v10H6z" fill="#f5f3f3" /><path d="M3 4h5v7h7v5H3z" fill="#33302f" /><path d="M8 11h7v2H8z" fill="#77706f" /></> },
  { name: "Microsoft Edge", icon: <><circle cx="9" cy="9" r="8.500" fill="#1b74c9" /><path d="M.8 8C2 2 8-.5 12.500 1.200c4.500 1.800 6 6.300 4 9.300-1.500 2.500-5.500 2-6 1 1.500-2 0-5-3-5-3.500 0-5.700 1.500-6.700 1.500z" fill="#3bc489" /><path d="M.8 9C1.500 6 6 4.500 9 6.500c-3.500.5-4.500 4-3 6.500 2 3 6 3 10 1.500C12 20 1.500 18.500.8 9z" fill="#1358a8" /><path d="M7.500 7c3 0 4 3 3 4.500.5 1.500 3 1.500 4.500 1-3 3-8 1-7.500-5.500z" fill="#d9ecf5" /></> },
  { name: "HP", icon: <><circle cx="9" cy="9" r="8.500" fill="#0b3fd0" /><text x="9" y="12.500" textAnchor="middle" fontSize="13" fontStyle="italic" fontWeight="bold" fill="#fff">hp</text></> },
  { name: "Copilot", icon: null },
  { name: "File Explorer", icon: <><path d="M1 3h6l2 2h8v11H1z" fill="#e6a323" /><path d="M1 6h16v10H1z" fill="#fbcf4d" /><path d="M4 12h10v4H4z" fill="#2a7cc7" /></> },
  { name: "Get Help", icon: <><circle cx="8" cy="10" r="8" fill="#1a86cf" /><text x="7.500" y="15" textAnchor="middle" fontSize="13" fontWeight="bold" fill="#fff">?</text><circle cx="13" cy="4.800" r="4.800" fill="#fbb81f" /></> },
  { name: "Microsoft Store", icon: <><path d="M5.500 5V2.500h7V5" fill="none" stroke="#1e6fb8" strokeWidth="1.300" /><rect x="1" y="4" width="16" height="13.500" rx="2" fill="#17406f" /><path d="M6 7.500h2.700v2.700H6z" fill="#f25022" /><path d="M9.500 7.500h2.700v2.700H9.500z" fill="#7fba00" /><path d="M6 11h2.700v2.700H6z" fill="#00a4ef" /><path d="M9.500 11h2.700v2.700H9.500z" fill="#ffb900" /></> },
  { name: "McAfee", icon: <path d="M1.500 1.500l7.500 4 7.500-4v12l-7.500 4-7.500-4zM4.500 6v5.800l4.500 2.500 4.500-2.500V6L9 8.500z" fill="#c32032" fillRule="evenodd" /> },
  { name: "Mail", icon: <><path d="M1 8l9-6 7 4v9H4z" fill="#1560b8" /><path d="M1 8l8 4 8-6v9.500H1z" fill="#37a3ee" /><path d="M8 8l8-2v6l-6 3z" fill="#9ed6fb" /></> },
  { name: "Download Manager", icon: <><circle cx="8.500" cy="8.500" r="7" fill="#2f8a3c" /><path d="M3 5c3-4 9-4 11-1-3 4-8 6-12 5z" fill="#203a74" /><path d="M0 11c6 2 13-1 17-7-1 7-9 12-17 7z" fill="#f2c62b" /><path d="M7 10h5v4h2l-4 4-4-4h2z" fill="#4fb14a" /></> },
  { name: "Teams", running: "idle", icon: <><circle cx="7" cy="5" r="3" fill="#5b5fc7" /><path d="M2 8.500h10v5c0 4-8 4-8 1z" fill="#7b83eb" /><rect x="0" y="8" width="8" height="8" rx="1" fill="#4b53bc" /><text x="4" y="14.500" textAnchor="middle" fontSize="7" fontWeight="bold" fill="#fff">T</text><circle cx="13.300" cy="4.700" r="4.700" fill="#d0102a" /><path d="M11 4.500h5" stroke="#fff" strokeWidth="1.300" /><path d="M11 13h5" stroke="#8a8a9a" /></> },
  { name: "WhatsApp", running: "idle", icon: null },
  { name: "Power BI", running: "active", icon: <><path d="M0 0h18v18H0z" fill="#1f4b7a" /><path d="M9 0h9v18H9z" fill="#f5c23b" /><path d="M5 7h6v11H5z" fill="#f8d873" /><path d="M14 0h4v18h-4z" fill="#d99b1c" /><path d="M0 12h5v6H0z" fill="#3c8ac0" /></> },
];

function Taskbar() {
  return (
    <nav className="flex h-8 shrink-0 items-center border-t border-[#565452] bg-[linear-gradient(90deg,#d5dae6_0%,#d3dae6_22%,#dde4de_31%,#efd3d9_40%,#efd5da_54%,#e2dde6_65%,#dfe5ef_75%,#ebedf0_84%)] text-[8px] text-[#33312f]">
      <button className="flex w-[20.900%] items-center gap-[3px] pl-3 text-left">
        <svg width="19" height="20" viewBox="0 0 19 20" aria-hidden="true">
          <circle cx="7" cy="8" r="5" fill="#f29b38" />
          <path d="M5 19a4 4 0 0 1 0-7c1-3 6-3 7 0 5-1 6 6 1 7z" fill="#a9c8f2" />
          <circle cx="13.500" cy="5" r="5" fill="#c42b1c" />
          <text x="13.500" y="8" textAnchor="middle" fontSize="8" fontFamily="Roboto" fill="#fff">2</text>
        </svg>
        <span className="leading-[11px]">12°C<br /><span className="text-[#605e5c]"><bdi>غائم غالبًا</bdi></span></span>
      </button>
      <button aria-label="Start">
        <svg width="16" height="16" viewBox="0 0 16 16" aria-hidden="true"><path d="M0 0h7.500v7.500H0z" fill="#2fa9ec" /><path d="M8.500 0H16v7.500H8.500z" fill="#2399e4" /><path d="M0 8.500h7.500V16H0z" fill="#1b8ddc" /><path d="M8.500 8.500H16V16H8.500z" fill="#0f76cb" /></svg>
      </button>
      <label className="ml-[9px] flex h-[19px] w-[142px] items-center gap-[5px] rounded-full bg-white/75 pr-[2px] pl-[7px]">
        <Search size={12} strokeWidth={2} />
        <input aria-label="Taskbar search" placeholder="Search" className="min-w-0 flex-1 bg-transparent font-['Open_Sans',sans-serif] text-[9px] outline-none placeholder:text-[#605e5c]" />
        <svg width="33" height="16" viewBox="0 0 33 16" aria-hidden="true">
          <path d="M1 5c8-4 22-5 31-1v4c-2 3-6 6-12 7H9C4 14 1 12 1 9z" fill="#dccf9d" />
          <path d="M1 4c9-4 23-4 31 1l-5 4H3z" fill="#4fb5c6" />
          <path d="M22 2c5-2 9 0 10 5l-7-2z" fill="#3f8f4d" />
          <path d="M4 12c2-7 9-9 15-7 5 1 9 4 11 7l-10 2z" fill="#7c8378" />
          <path d="M8 9c4-4 10-3 13 1z" fill="#a3a89a" />
          <path d="M1 11c6 3 20 4 31-1l-6 5H7z" fill="#5b8c53" />
        </svg>
      </label>
      <div className="ml-px grid w-[374px] grid-cols-13">
        {apps.map((a) => (
          <button key={a.name} aria-label={a.name} className="flex flex-col items-center">
            <span className={`flex h-[25px] w-[25px] items-center justify-center rounded-sm ${a.running === "active" ? "bg-white/70" : ""}`}>
              {a.name === "Copilot" ? <CopilotLogo size={17} /> : a.name === "WhatsApp" ? <FaWhatsapp size={18} color="#1f7a50" /> : <svg width="17" height="17" viewBox="0 0 18 18" aria-hidden="true">{a.icon}</svg>}
            </span>
            <span className={`h-[2px] rounded-full ${a.running === "active" ? "w-[9px] bg-[#1070c0]" : a.running === "idle" ? "w-1 bg-[#8a8886]" : "w-1"}`} />
          </button>
        ))}
      </div>
      <div className="ml-auto flex items-center pr-3">
        <button aria-label="Hidden icons"><ChevronUp size={11} strokeWidth={2} /></button>
        <button aria-label="Cloud sync" className="ml-[9px]">
          <svg width="12" height="11" viewBox="0 0 12 11" aria-hidden="true"><path d="M3 8a2.500 2.500 0 0 1 0-5c1-3 6-3 6.500 0 2 0 2 3 1 4" fill="#d5d3d1" stroke="#605e5c" /><circle cx="8" cy="7.500" r="3.200" fill="#d0102a" /><path d="M6.800 6.300l2.400 2.400M9.200 6.300L6.800 8.700" stroke="#fff" strokeWidth=".9" /></svg>
        </button>
        <button aria-label="Microphone" className="ml-[5px] flex h-[26px] w-[20px] items-center justify-center rounded-[2px] bg-[#0a64c0]">
          <svg width="9" height="12" viewBox="0 0 9 12" fill="none" stroke="#fff" aria-hidden="true"><rect x="3" y="1" width="3" height="6" rx="1.500" fill="#fff" /><path d="M1.500 5.500c0 4.500 6 4.500 6 0M4.500 9v2.500" /></svg>
        </button>
        <span className="ml-3 w-[6px] text-[9px]">ع</span>
        <button aria-label="Network" className="ml-[15px]"><Wifi size={12} strokeWidth={2} /></button>
        <button aria-label="Volume" className="ml-[5px]">
          <svg width="11" height="10" viewBox="0 0 11 10" fill="none" stroke="#484644" aria-hidden="true"><path d="M.5 3.500h2L5 1v8L2.500 6.500h-2zM6.500 3.500c1 1 1 2 0 3M8 2c1.500 2 1.500 4 0 6M9.500 .8c2 2.500 2 6 0 8.500" strokeWidth=".9" /></svg>
        </button>
        <button aria-label="Battery" className="ml-[5px]">
          <svg width="14" height="9" viewBox="0 0 14 9" aria-hidden="true"><rect x=".5" y="1.500" width="11.500" height="6.500" rx="1.500" fill="none" stroke="#484644" /><path d="M12 3.500h1.500v2.500H12z" fill="#484644" /><path d="M1 2h5v5.500H1z" fill="#2c8a3b" /><path d="M5 0v5M3 2h4" stroke="#1f5f2a" /></svg>
        </button>
        <time className="ml-[9px] text-right leading-[10px] whitespace-nowrap">10:14 PM<br />3/9/2026</time>
        <button aria-label="Notifications" className="ml-[5px]">
          <svg width="10" height="11" viewBox="0 0 10 11" aria-hidden="true"><path d="M1.500 8V4c0-4 6.500-4 6.500 0v4l1 .8H.5z M3.500 9.500h2.500l-1.200 1z" fill="#33312f" /><path d="M5.500 2.500H8L5.800 5.200H8.300" fill="none" stroke="#fff" strokeWidth=".8" /></svg>
        </button>
      </div>
    </nav>
  );
}

export default function App() {
  return (
    <div className="flex h-screen flex-col overflow-hidden font-['Lato','Noto_Sans',sans-serif]">
      <TitleBar />
      <Tabs />
      <Ribbon />
      <div className="flex min-h-0 flex-1">
        <ViewRail />
        <Canvas />
        <aside className="flex w-[21px] shrink-0 flex-col items-center bg-[#fbfbfb] text-[#252423]">
          <button aria-label="Expand filters" className="mt-[5px]"><ChevronsLeft size={14} strokeWidth={1.500} /></button>
          <Filter size={9} strokeWidth={2} className="mt-[7px] rotate-90" />
          <span className="mt-[5px] font-['Open_Sans',sans-serif] text-[9px] leading-[12px] font-semibold [writing-mode:vertical-rl]">Filters</span>
        </aside>
        <Visualizations />
        <DataPane />
      </div>
      <StatusBar />
      <Taskbar />
    </div>
  );
}
